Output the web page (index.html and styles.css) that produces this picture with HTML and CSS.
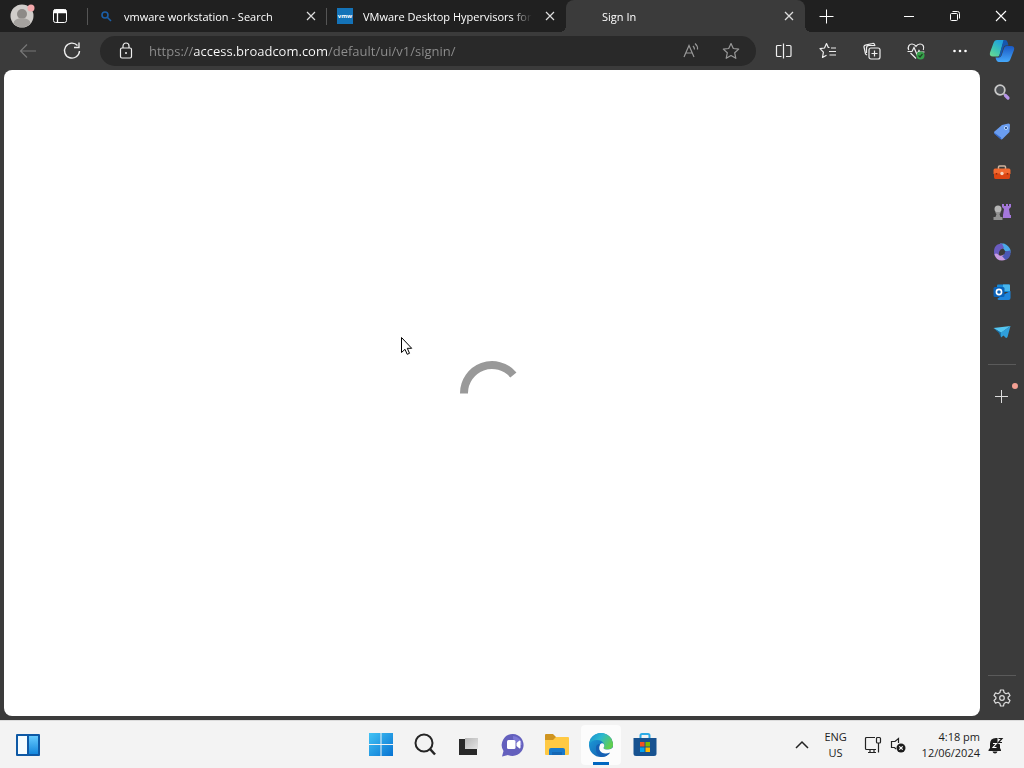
FILE: index.html
```html
<!DOCTYPE html>
<html lang="en">
<head>
    <meta charset="UTF-8">
    <title>Sign In</title>
    <link rel="stylesheet" href="styles.css">
</head>
<body>
    <div class="browser">
        <header class="tab-strip">
            <button class="profile" aria-label="Profile">
                <svg width="28" height="28" viewBox="0 0 28 28">
                    <circle cx="14" cy="14" r="11.5" fill="#d0cdca"/>
                    <circle cx="14" cy="12" r="5" fill="#8d8a87"/>
                    <path d="M5.500 21.500a8.500 5.500 0 0 1 17 0a11.500 11.500 0 0 1-17 0z" fill="#a5a29f"/>
                    <circle cx="23" cy="6" r="3.500" fill="#f4a9ac"/>
                </svg>
            </button>
            <button class="tab-actions" aria-label="Tab actions">
                <svg width="16" height="16" viewBox="0 0 16 16" fill="none" stroke="#fff">
                    <rect x="1.500" y="1.500" width="13" height="13" rx="2"/>
                    <path d="M1.500 3.500h13M1.500 4.500h13M5.500 4.500v10" stroke-width="1.300"/>
                    <path d="M2 2.500h12" stroke-width="2"/>
                </svg>
            </button>
            <nav class="tabs">
                <div class="tab">
                    <svg class="tab-icon" width="16" height="16" viewBox="0 0 16 16" fill="none" stroke="#1b5fa8" stroke-width="1.600">
                        <circle cx="7" cy="7" r="3"/>
                        <path d="M9.500 9.500l3.500 3.500"/>
                    </svg>
                    <a class="tab-title" href="#">vmware workstation - Search</a>
                    <button class="tab-close" aria-label="Close tab">
                        <svg width="16" height="16" viewBox="0 0 16 16" stroke="#ddd" stroke-width="1.200"><path d="M4 4l8 8M12 4l-8 8"/></svg>
                    </button>
                </div>
                <div class="tab">
                    <span class="tab-icon vmw">vmw</span>
                    <a class="tab-title" href="#">VMware Desktop Hypervisors for</a>
                    <button class="tab-close" aria-label="Close tab">
                        <svg width="16" height="16" viewBox="0 0 16 16" stroke="#ddd" stroke-width="1.200"><path d="M4 4l8 8M12 4l-8 8"/></svg>
                    </button>
                </div>
                <div class="tab active">
                    <span class="tab-icon"></span>
                    <a class="tab-title" href="#">Sign In</a>
                    <button class="tab-close" aria-label="Close tab">
                        <svg width="16" height="16" viewBox="0 0 16 16" stroke="#ddd" stroke-width="1.300"><path d="M4 4l8 8M12 4l-8 8"/></svg>
                    </button>
                </div>
            </nav>
            <button class="new-tab" aria-label="New tab">
                <svg width="16" height="16" viewBox="0 0 16 16" stroke="#fff"><path d="M8.500 1.500v14M1.500 8.500h14"/></svg>
            </button>
            <div class="window-controls">
                <button aria-label="Minimize">
                    <svg width="12" height="12" viewBox="0 0 12 12" stroke="#fff"><path d="M1 6.500h10"/></svg>
                </button>
                <button aria-label="Restore">
                    <svg width="12" height="12" viewBox="0 0 12 12" fill="none" stroke="#fff"><rect x="1.500" y="3.500" width="7" height="7" rx="1"/><path d="M3.500 1.500h5a2 2 0 0 1 2 2v5"/></svg>
                </button>
                <button aria-label="Close">
                    <svg width="12" height="12" viewBox="0 0 12 12" stroke="#fff" stroke-width="1.100"><path d="M1 1l10 10M11 1L1 11"/></svg>
                </button>
            </div>
        </header>

        <div class="toolbar">
            <button class="nav-button" aria-label="Back">
                <svg width="20" height="20" viewBox="0 0 20 20" fill="none" stroke="#777" stroke-width="1.200"><path d="M18 10H2.500M9 3.500L2.500 10L9 16.500"/></svg>
            </button>
            <button class="nav-button" aria-label="Refresh">
                <svg width="20" height="20" viewBox="0 0 20 20" fill="none" stroke="#eee" stroke-width="1.400"><path d="M15.500 4.500A7.500 7.500 0 1 0 17.500 10M17 1.500v5h-5"/></svg>
            </button>
            <form class="address-bar">
                <svg class="lock" width="16" height="18" viewBox="0 0 16 18" fill="none" stroke="#eee" stroke-width="1.200">
                    <rect x="2.500" y="6" width="11" height="10" rx="1.500"/>
                    <path d="M5 6V4a3 3 0 0 1 6 0v2"/>
                    <circle cx="8" cy="11" r="1" fill="#eee" stroke="none"/>
                </svg>
                <input class="address" type="text" aria-label="Address" value="https://access.broadcom.com/default/ui/v1/signin/">
                <button type="button" aria-label="Read aloud">
                    <svg width="18" height="18" viewBox="0 0 18 18" fill="none" stroke="#999" stroke-width="1.200"><path d="M2 15L7 3.500L12 15M3.800 11h6.400M11 4q1.500 1.500 1.500 3.500M13 1.500q3 2.500 2.500 6"/></svg>
                </button>
                <button type="button" aria-label="Add to favorites">
                    <svg width="18" height="18" viewBox="0 0 18 18" fill="none" stroke="#999" stroke-width="1.200" stroke-linejoin="round"><path d="M9 1.500l2.300 5 5.400.6-4 3.700 1.100 5.500L9 13.600l-4.800 2.700 1.100-5.500-4-3.700 5.400-.6z"/></svg>
                </button>
            </form>
            <div class="tools">
                <button aria-label="Split screen">
                    <svg width="18" height="18" viewBox="0 0 18 18" fill="none" stroke="#eee" stroke-width="1.200"><path d="M6.500 3.500h-4a1 1 0 0 0-1 1v9a1 1 0 0 0 1 1h4M11 3.500h4a1 1 0 0 1 1 1v9a1 1 0 0 1-1 1h-4M8.500 1.500v15"/></svg>
                </button>
                <button aria-label="Favorites">
                    <svg width="18" height="18" viewBox="0 0 18 18" fill="none" stroke="#eee" stroke-width="1.200" stroke-linejoin="round"><path d="M10.500 5.500H9.300L7.500 1.500L5.500 6L1 6.700l3.400 3.500-.9 5.300 4-2.300M12 6h5M10 9.500h7M10.500 13h6.500"/></svg>
                </button>
                <button aria-label="Collections">
                    <svg width="18" height="18" viewBox="0 0 18 18" fill="none" stroke="#eee" stroke-width="1.200"><rect x="6" y="6" width="11" height="11" rx="2"/><path d="M11.500 8.500v6M8.500 11.500h6M4 13L2.500 12L1 5a1.500 1.500 0 0 1 1.300-1.800L9.500 1.500a1.500 1.500 0 0 1 2 1L12 4M3.500 11V6a2.500 2.500 0 0 1 2.500-2.500h6"/></svg>
                </button>
                <button aria-label="Browser essentials">
                    <svg width="18" height="18" viewBox="0 0 18 18" fill="none" stroke="#eee" stroke-width="1.200">
                        <path d="M1.700 8C.3 4.500 2.500 2 5 2c1.700 0 3 .8 4 2.300C10 2.800 11.300 2 13 2c2.700 0 4.700 2.500 3.300 6M3.500 11L9 16.500"/>
                        <path d="M.500 9.500H5l2-4 3 7 2-4 1 1.500h4.500"/>
                        <circle cx="13.500" cy="13.500" r="4" fill="#37a24b" stroke="none"/>
                        <path d="M11.500 13.500l1.500 1.500 2.500-3" stroke="#1d4524"/>
                    </svg>
                </button>
                <button aria-label="Settings and more">
                    <svg width="16" height="16" viewBox="0 0 16 16" fill="#fff"><circle cx="2.500" cy="8" r="1.300"/><circle cx="8" cy="8" r="1.300"/><circle cx="13.500" cy="8" r="1.300"/></svg>
                </button>
            </div>
            <button class="copilot" aria-label="Copilot">
                <svg width="26" height="24" viewBox="0 0 26 24">
                    <defs>
                        <linearGradient id="copilot-left" x1="0" y1="1" x2=".6" y2="0"><stop offset="0" stop-color="#6fdc8c"/><stop offset=".5" stop-color="#3cc3b4"/><stop offset="1" stop-color="#22a2dc"/></linearGradient>
                        <linearGradient id="copilot-right" x1="0" y1="0" x2="0" y2="1"><stop offset="0" stop-color="#1a58c4"/><stop offset="1" stop-color="#45a8fa"/></linearGradient>
                    </defs>
                    <path d="M8 1h7L10.500 16q-.5 1.500-2 1.500H4q-4 0-3-4L4.500 4Q5.500 1 8 1z" fill="url(#copilot-left)"/>
                    <path d="M14.500 1H16q2 0 2.500 2l1 3.500H17q-2 0-2.500 2L12 17q-.5 1.500-2 1.500l.5-2.500z" fill="#1556ae"/>
                    <path d="M17.500 7H22q4 0 3 4l-3.500 9q-1 3-3.500 3h-8q-2.500 0-3.500-4.500H10q2 0 2.500-2L15 9q.5-2 2.500-2z" fill="url(#copilot-right)"/>
                </svg>
            </button>
        </div>

        <div class="content">
            <main class="page">
                <svg class="spinner" width="64" height="64" viewBox="0 0 64 64" fill="none" stroke="#999" stroke-width="8" role="img" aria-label="Loading"><path d="M4 32.500V32A28 28 0 0 1 53.400 14"/></svg>
            </main>
            <aside class="sidebar">
                <button aria-label="Search">
                    <svg width="18" height="18" viewBox="0 0 18 18" fill="none"><circle cx="7" cy="7" r="4.800" fill="#4d5054" stroke="#c9c9c9" stroke-width="1.800"/><path d="M10.500 10.500l2 2" stroke="#aaa" stroke-width="2"/><path d="M12.500 12.500l2.500 2.500" stroke="#b594e8" stroke-width="3.200" stroke-linecap="round"/></svg>
                </button>
                <button aria-label="Shopping">
                    <svg width="18" height="18" viewBox="0 0 18 18"><path d="M9 2l6.500-1.500q1.500 0 1.500 1.500l-.5 7L9.500 16q-1 .8-2 0L1.500 10.500q-1-1 0-2z" fill="#6a9df0"/><path d="M1 9.500l7 5 .5 2-1-.5L1.500 11z" fill="#3568c9"/><circle cx="13" cy="5" r="1.600" fill="#284d8c" stroke="#b9d8ff"/></svg>
                </button>
                <button aria-label="Tools">
                    <svg width="18" height="18" viewBox="0 0 18 18"><path d="M5.500 6V4q0-1 1-1h5q1 0 1 1v2" fill="none" stroke="#d0b49f" stroke-width="1.500"/><path d="M2 5.500h14q1.500 0 1.500 2V11H.5V7.500q0-2 1.500-2z" fill="#f2692f"/><path d="M1 10.500h16V14q0 2-1.500 2h-13Q1 16 1 14z" fill="#dc4612"/><path d="M3.500 10v1.500M14.500 10v1.500" stroke="#8d280a" stroke-width="1.500"/><circle cx="9" cy="10.500" r="1.700" fill="#f4d5bd"/></svg>
                </button>
                <button aria-label="Games">
                    <svg width="20" height="18" viewBox="0 0 20 18"><path d="M10 1h2v2h2V1h2v2h1V1h2v3l-2 2 1 6h1v3h-8v-3l1-6-2-2z" fill="#a477da"/><circle cx="6" cy="6" r="3.500" fill="#b5b5b5"/><path d="M3.500 9h5v1L7.500 11l1 3h2v3h-9v-3h2l1-3-1-1z" fill="#929292"/></svg>
                </button>
                <button aria-label="Microsoft 365">
                    <svg width="18" height="18" viewBox="0 0 18 18"><path d="M7 .5h4q5 2 6.500 6.500v3L12 8Q11 5 7 4z" fill="#4aa9e8"/><path d="M9 .5C3.500.5 1 4 1 9q0 2 .5 3.500L6 13Q4.500 7 11 5z" fill="#6a5bc0"/><path d="M1.500 11.500q1.500 6 7.500 6 4 0 6.500-3.500L11 11.500Q7 14 4.500 11q-2-1-3 .5z" fill="#c79ae0"/><path d="M17.500 7.500v4q-1 4-5 5.500l-3.500-4Q12 12 12 8.500z" fill="#4a58b5"/><path d="M7.500 6.500l4 2.500-4 2.500z" fill="#3b3b3b"/></svg>
                </button>
                <button aria-label="Outlook">
                    <svg width="18" height="18" viewBox="0 0 18 18"><path d="M5 1.500h11q1 0 1 1V9H4V2.500q0-1 1-1z" fill="#1688d8"/><path d="M10 1.500h6q1 0 1 1V8h-7z" fill="#48b6ed"/><path d="M17.500 8v7q0 2-2 2H6q-1.500 0-1.500-1.500L10 12z" fill="#1f85dc"/><rect x=".5" y="4" width="11" height="10" rx="1.500" fill="#0b62b8"/><circle cx="6" cy="9" r="2.600" fill="none" stroke="#fff" stroke-width="1.600"/></svg>
                </button>
                <button aria-label="Drop">
                    <svg width="18" height="18" viewBox="0 0 18 18"><path d="M.5 5L17.500 3 8 10z" fill="#55c7f2"/><path d="M17.500 3L8 9.500v5l2.500-2 2.500 2.500q1 0 1.500-1z" fill="#2f9fdc"/><path d="M.5 5L8 9.500v5L6 10z" fill="#1872ab"/></svg>
                </button>
                <hr>
                <button class="customize" aria-label="Customize">
                    <svg width="16" height="16" viewBox="0 0 16 16" stroke="#ddd"><path d="M7.500 2v13M1 8.500h13"/></svg>
                    <span class="dot"></span>
                </button>
                <hr class="push-down">
                <button aria-label="Settings">
                    <svg width="18" height="18" viewBox="0 0 18 18" fill="none" stroke="#ddd" stroke-width="1.200" stroke-linejoin="round"><path d="M7.500 1h3l.6 2.600 1.900 1.100 2.500-.8 1.500 2.600L15.100 8.300v1.400l1.900 1.800-1.500 2.600-2.500-.8-1.900 1.100-.6 2.600h-3l-.6-2.600L5 13.300l-2.500.8L1 11.500l1.900-1.800V8.300L1 6.500l1.500-2.600 2.500.8 1.900-1.100z"/><circle cx="9" cy="9" r="2.300"/></svg>
                </button>
            </aside>
        </div>
    </div>

    <footer class="taskbar">
        <button class="widgets" aria-label="Widgets">
            <svg width="24" height="22" viewBox="0 0 24 22"><defs><linearGradient id="widget-blue" x1="0" y1="0" x2="0" y2="1"><stop offset="0" stop-color="#66cbff"/><stop offset="1" stop-color="#1487dc"/></linearGradient></defs><rect width="24" height="22" rx="1" fill="#0e59a5"/><rect x="2" y="2" width="9" height="18" fill="#f5fcff"/><rect x="13" y="2" width="9" height="18" fill="url(#widget-blue)"/></svg>
        </button>
        <div class="apps">
            <button aria-label="Start">
                <svg width="24" height="24" viewBox="0 0 24 24"><defs><linearGradient id="start-blue" gradientUnits="userSpaceOnUse" x1="0" y1="0" x2="24" y2="24"><stop offset="0" stop-color="#42c3f5"/><stop offset="1" stop-color="#0671d1"/></linearGradient></defs><path d="M0 0h11.500v11H0zM12.500 0H24v11H12.500zM0 12h11.500v11H0zM12.500 12H24v11H12.500z" fill="url(#start-blue)"/></svg>
            </button>
            <button aria-label="Search">
                <svg width="24" height="24" viewBox="0 0 24 24" fill="none" stroke="#252525" stroke-width="2"><circle cx="11" cy="10" r="8.500"/><path d="M17 16l5 5.500" stroke-width="2.500"/></svg>
            </button>
            <button aria-label="Task view">
                <svg width="24" height="24" viewBox="0 0 24 24"><defs><linearGradient id="task-grey" x1="0" y1="0" x2="1" y2="1"><stop offset="0" stop-color="#b8b8b8"/><stop offset="1" stop-color="#e4e4e4"/></linearGradient></defs><path d="M2 6h18v16H2z" fill="#292929"/><path d="M8 5h13v11H8z" fill="url(#task-grey)"/></svg>
            </button>
            <button aria-label="Chat">
                <svg width="24" height="24" viewBox="0 0 24 24"><path d="M12 1a11 11 0 1 1-5 21L1 23.500 2.500 18A11 11 0 0 1 12 1z" fill="#6460bd"/><path d="M12 3a9 9 0 0 1 9 9h-3l-6-6z" fill="#7c78d5"/><rect x="6" y="7" width="8.500" height="9" rx="1.500" fill="#fff"/><path d="M15.500 10l3-2.500q1 0 1 1v6q0 1-1 1l-3-2.500z" fill="#fff"/></svg>
            </button>
            <button aria-label="File Explorer">
                <svg width="26" height="24" viewBox="0 0 26 24"><path d="M1 2q0-1 1-1h7l3 3v4H1z" fill="#cf9420"/><path d="M1 7h8l3-3h12q1 0 1 1v16q0 1-1 1H2q-1 0-1-1z" fill="#ffc943"/><path d="M5 22v-5q0-2 2-2h12q2 0 2 2v5z" fill="#1879cb"/><path d="M8 19h10v3H8z" fill="#1467b4"/></svg>
            </button>
            <button class="open" aria-label="Microsoft Edge">
                <svg width="26" height="26" viewBox="0 0 26 26">
                    <defs>
                        <linearGradient id="edge-top" x1="0" y1="0" x2="1" y2=".5"><stop offset="0" stop-color="#168bd0"/><stop offset=".5" stop-color="#2cb8cf"/><stop offset="1" stop-color="#61ce50"/></linearGradient>
                        <linearGradient id="edge-low" x1="0" y1="0" x2="1" y2="1"><stop offset="0" stop-color="#1da3df"/><stop offset="1" stop-color="#1252a4"/></linearGradient>
                    </defs>
                    <circle cx="13" cy="13" r="12" fill="url(#edge-low)"/>
                    <path d="M1 13A12 12 0 0 1 25 13q0 4-5 4.500-4 0-4.500-1.500 1.500-2 .5-4Q14 8 9 8 3 8 1 13z" fill="url(#edge-top)"/>
                    <path d="M12 12.500q2-2 3.800-.5 1.200 2-.3 4 .5 1.500 4.500 1.500 3 0 5-2l1 3-1.500 3q-1.500.5-2-.5-4 2-8 .5Q9.500 18 12 12.500z" fill="#fcfcfc"/>
                    <path d="M8 17q-.5-5 4-5-3 5 1.500 8.500 4 2 8.500 0Q19 25 13 25 8 23 8 17z" fill="#1560b4"/>
                </svg>
            </button>
            <button aria-label="Microsoft Store">
                <svg width="24" height="24" viewBox="0 0 24 24"><path d="M7.500 6V2.500Q7.500 1 9 1h6q1.500 0 1.500 1.500V6" fill="none" stroke="#2cabe6" stroke-width="2"/><path d="M.500 5h23v15.500q0 2.500-2.500 2.500H3Q.5 23 .5 20.500z" fill="#175290"/><path d="M7 9h4.500v4.500H7z" fill="#f25022"/><path d="M12.500 9H17v4.500h-4.500z" fill="#7fba00"/><path d="M7 14.500h4.500V19H7z" fill="#00a4ef"/><path d="M12.500 14.500H17V19h-4.500z" fill="#ffb900"/></svg>
            </button>
        </div>
        <div class="tray">
            <button class="chevron" aria-label="Show hidden icons">
                <svg width="14" height="10" viewBox="0 0 14 10" fill="none" stroke="#222" stroke-width="1.500"><path d="M1 8l6-6 6 6"/></svg>
            </button>
            <button class="language">ENG<br>US</button>
            <button class="status" aria-label="Network and sound">
                <svg width="18" height="18" viewBox="0 0 18 18" fill="none" stroke="#222" stroke-width="1.200"><path d="M11 1.500H2.500a1 1 0 0 0-1 1v10a1 1 0 0 0 1 1H12M14.500 7v9.500M6 13.500v3M10 13.500v3M4 16.500h8"/><rect x="12.500" y="1.500" width="4" height="5.500" rx="1"/></svg>
                <svg width="16" height="16" viewBox="0 0 16 16" fill="none" stroke="#222" stroke-width="1.200"><path d="M8.500 6V1.500L5 4.500H1.500v6h3l1.500 1.500"/><circle cx="11" cy="11" r="4.500" fill="#1c1c1c" stroke="none"/><path d="M9.300 9.300l3.400 3.400M12.700 9.300l-3.400 3.400" stroke="#fff"/></svg>
            </button>
            <button class="clock">4:18 pm<br>12/06/2024</button>
            <button class="bell" aria-label="Notifications">
                <svg width="16" height="18" viewBox="0 0 16 18"><path d="M8 2Q2 2 2 8v4L.5 14v1H13v-1l-1-2V8.500L9.500 7V2z" fill="#1c1c1c"/><path d="M4.500 15.500h5q-.5 2-2.500 2t-2.500-2z" fill="#1c1c1c"/><path d="M5 7.500h3.500L5 11.500h3.500" fill="none" stroke="#fff" stroke-width="1.100"/><path d="M10.500 2.500H14l-3.500 4H14" fill="none" stroke="#1c1c1c" stroke-width="1.200"/></svg>
            </button>
        </div>
    </footer>

    <svg class="cursor" width="14" height="20" viewBox="0 0 14 20" fill="#fff" stroke="#000"><path d="M1.500 1.500v15l3.500-3.200 2.200 5 2.300-1-2.200-5h4.400z"/></svg>
</body>
</html>
```
FILE: styles.css
```css
* {
    box-sizing: border-box;
}

body {
    margin: 0;
    height: 100vh;
    display: flex;
    flex-direction: column;
    overflow: hidden;
    font-family: "Open Sans", "Noto Sans", sans-serif;
    font-size: 11px;
}

button {
    display: flex;
    align-items: center;
    justify-content: center;
    flex-shrink: 0;
    padding: 0;
    border: none;
    background: none;
    font: inherit;
    color: inherit;
}

svg {
    display: block;
    flex-shrink: 0;
}

.browser {
    flex: 1;
    min-height: 0;
    display: flex;
    flex-direction: column;
    background-color: #3b3b3b;
}

/* Tabs */
.tab-strip {
    display: flex;
    height: 32px;
    background-color: #202020;
    color: #fff;
}

.profile {
    width: 44px;
}

.tab-actions {
    width: 32px;
}

.tabs {
    display: flex;
    flex: 0 1 729px;
    min-width: 0;
    padding-left: 12px;
    background: linear-gradient(#555, #555) 11px 8px / 1px 17px no-repeat;
}

.tab {
    flex: 1;
    min-width: 0;
    display: flex;
    align-items: center;
    gap: 10px;
    padding: 0 8px 0 10px;
    background: linear-gradient(#555, #555) right 8px / 1px 17px no-repeat;
}

.tab:nth-child(2) {
    background: none;
}

.tab.active {
    position: relative;
    background: #3b3b3b;
    border-radius: 8px 8px 0 0;
}

/* curved feet of the active tab */
.tab.active::before,
.tab.active::after {
    content: "";
    position: absolute;
    bottom: 0;
    width: 6px;
    height: 6px;
}

.tab.active::before {
    right: 100%;
    background: radial-gradient(circle at 0 0, transparent 6px, #3b3b3b 6px);
}

.tab.active::after {
    left: 100%;
    background: radial-gradient(circle at 100% 0, transparent 6px, #3b3b3b 6px);
}

.tab-icon {
    width: 16px;
    height: 16px;
    flex-shrink: 0;
}

.vmw {
    background-color: #1473b8;
    font-size: 6px;
    font-weight: bold;
    line-height: 16px;
    text-align: center;
}

.tab-title {
    flex: 1;
    min-width: 0;
    overflow: hidden;
    white-space: nowrap;
    color: #fff;
    text-decoration: none;
    -webkit-mask-image: linear-gradient(to right, #000 88%, transparent);
    mask-image: linear-gradient(to right, #000 88%, transparent);
}

.new-tab {
    width: 42px;
}

.window-controls {
    display: flex;
    margin-left: auto;
}

.window-controls button {
    width: 46px;
}

/* Toolbar */
.toolbar {
    display: flex;
    align-items: center;
    height: 38px;
    padding: 0 2px 0 6px;
}

.nav-button {
    width: 44px;
    height: 30px;
}

.address-bar {
    flex: 1;
    min-width: 0;
    display: flex;
    align-items: center;
    height: 30px;
    margin: 0 6px;
    padding: 0 5px 0 18px;
    border-radius: 15px;
    background-color: #292929;
}

.address-bar button {
    width: 40px;
    height: 30px;
}

.address {
    flex: 1;
    min-width: 0;
    height: 30px;
    margin-left: 15px;
    padding: 0;
    border: none;
    outline: none;
    font: 13px "Open Sans", "Noto Sans", sans-serif;
    color: transparent;
    /* host name brighter than the rest of the address */
    background: linear-gradient(to right, #8f8f8f 44px, #fff 44px, #fff 179px, #8f8f8f 179px);
    -webkit-background-clip: text;
    background-clip: text;
}

.tools {
    display: flex;
}

.tools button {
    width: 44px;
    height: 30px;
}

.copilot {
    width: 40px;
}

/* Page and sidebar */
.content {
    flex: 1;
    min-height: 0;
    display: flex;
}

.page {
    flex: 1;
    display: flex;
    align-items: center;
    justify-content: center;
    margin: 0 0 4px 4px;
    border-radius: 8px;
    background-color: #fff;
}

.sidebar {
    width: 44px;
    display: flex;
    flex-direction: column;
    padding: 2px 0;
}

.sidebar button {
    height: 40px;
}

.sidebar hr {
    width: 28px;
    height: 1px;
    margin: 12px 8px 11px;
    border: none;
    background-color: #5a5a5a;
}

.sidebar .push-down {
    margin: auto 8px 2px;
}

.customize {
    position: relative;
}

.dot {
    position: absolute;
    top: 7px;
    right: 6px;
    width: 6px;
    height: 6px;
    border-radius: 50%;
    background-color: #f4a093;
}

/* Taskbar */
.taskbar {
    display: grid;
    grid-template-columns: 1fr auto 1fr;
    align-items: center;
    height: 48px;
    border-top: 1px solid #dcdcdc;
    background-color: #f3f3f3;
    color: #1c1c1c;
}

.widgets {
    width: 56px;
    height: 44px;
}

.apps {
    display: flex;
    gap: 4px;
    padding-left: 2px;
}

.apps button {
    width: 40px;
    height: 40px;
    border-radius: 4px;
}

.apps .open {
    background: linear-gradient(#0067c0, #0067c0) center bottom / 16px 3px no-repeat #fcfcfc;
}

.tray {
    display: flex;
    align-items: center;
    justify-content: flex-end;
    padding-right: 20px;
    line-height: 16px;
}

.tray button {
    height: 40px;
}

.chevron {
    width: 28px;
}

.language {
    width: 40px;
}

.status {
    gap: 8px;
    padding: 0 8px;
}

.clock {
    margin: 0 8px;
    text-align: right;
}

.cursor {
    position: absolute;
    top: 336px;
    left: 400px;
}
```
